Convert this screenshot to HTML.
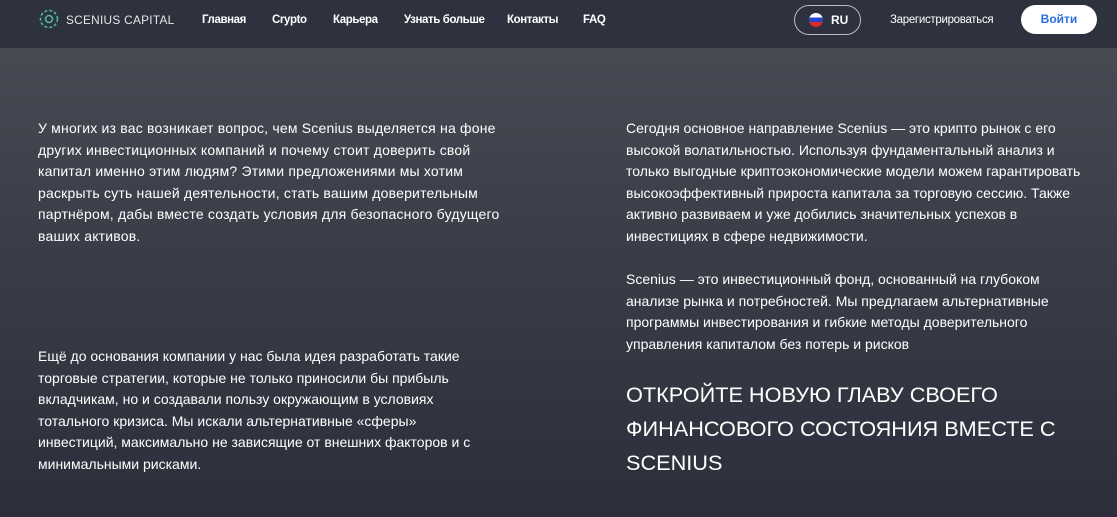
<!DOCTYPE html>
<html><head><meta charset="utf-8"><style>
*{margin:0;padding:0;box-sizing:border-box}
body{width:1117px;height:517px;overflow:hidden;font-family:"Liberation Sans",Arial,sans-serif;color:#fff;background:linear-gradient(180deg,#474a53 48px,#3a3d48 250px,#2c2f3b 517px);position:relative}
.hdr{position:absolute;left:0;top:0;width:1117px;height:48px;background:#2e313e}
.logo{position:absolute;left:39px;top:9px}
.brand{position:absolute;left:66px;top:13px;font-size:11.8px;letter-spacing:.3px;color:#e8e8e8}
.nav a{position:absolute;top:14px;font-size:11.5px;font-weight:bold;color:#fff;text-decoration:none;letter-spacing:-.4px}
.ru{position:absolute;left:794px;top:5px;width:67px;height:30px;border:1px solid #b9bcc4;border-radius:15px}
.flag{position:absolute;left:14px;top:7px;width:14px;height:14px;border-radius:50%;background:linear-gradient(#fff 0 33%,#2747c8 33% 66%,#d52b2b 66%)}
.ru span{position:absolute;left:36px;top:7px;font-size:12px;font-weight:bold}
.reg{position:absolute;left:890px;top:14px;font-size:11.5px;color:#fff;letter-spacing:-.3px}
.btn{position:absolute;left:1021px;top:5px;width:76px;height:29px;background:#fff;border-radius:15px;color:#2a6de0;font-size:12px;font-weight:bold;text-align:center;line-height:29px}
p{position:absolute;font-size:14px;line-height:21.6px;color:#fff}
h2{position:absolute;left:626px;top:378px;font-size:21.7px;font-weight:normal;line-height:34px;color:#fff}
</style></head><body>
<div class="hdr">
<svg class="logo" width="20" height="20" viewBox="0 0 20 20" fill="none" stroke="#4fb59a" stroke-width="1.6"><circle cx="10" cy="10" r="8.5" stroke-dasharray="3 2"/><circle cx="10" cy="10" r="3.5"/></svg>
<div class="brand">SCENIUS CAPITAL</div>
<div class="nav"><a style="left:202px">Главная</a><a style="left:272px">Crypto</a><a style="left:333px">Карьера</a><a style="left:404px">Узнать больше</a><a style="left:507px">Контакты</a><a style="left:583px">FAQ</a></div>
<div class="ru"><div class="flag"></div><span>RU</span></div>
<div class="reg">Зарегистрироваться</div>
<div class="btn">Войти</div>
</div>
<p style="left:38px;top:118px;letter-spacing:.2px">У многих из вас возникает вопрос, чем Scenius выделяется на фоне<br>других инвестиционных компаний и почему стоит доверить свой<br>капитал именно этим людям? Этими предложениями мы хотим<br>раскрыть суть нашей деятельности, стать вашим доверительным<br>партнёром, дабы вместе создать условия для безопасного будущего<br>ваших активов.</p>
<p style="left:38px;top:346px">Ещё до основания компании у нас была идея разработать такие<br>торговые стратегии, которые не только приносили бы прибыль<br>вкладчикам, но и создавали пользу окружающим в условиях<br>тотального кризиса. Мы искали альтернативные «сферы»<br>инвестиций, максимально не зависящие от внешних факторов и с<br>минимальными рисками.</p>
<p style="left:626px;top:118px">Сегодня основное направление Scenius — это крипто рынок с его<br>высокой волатильностью. Используя фундаментальный анализ и<br>только выгодные криптоэкономические модели можем гарантировать<br>высокоэффективный прироста капитала за торговую сессию. Также<br>активно развиваем и уже добились значительных успехов в<br>инвестициях в сфере недвижимости.</p>
<p style="left:626px;top:269px">Scenius — это инвестиционный фонд, основанный на глубоком<br>анализе рынка и потребностей. Мы предлагаем альтернативные<br>программы инвестирования и гибкие методы доверительного<br>управления капиталом без потерь и рисков</p>
<h2>ОТКРОЙТЕ НОВУЮ ГЛАВУ СВОЕГО<br>ФИНАНСОВОГО СОСТОЯНИЯ ВМЕСТЕ С<br>SCENIUS</h2>
</body></html>
